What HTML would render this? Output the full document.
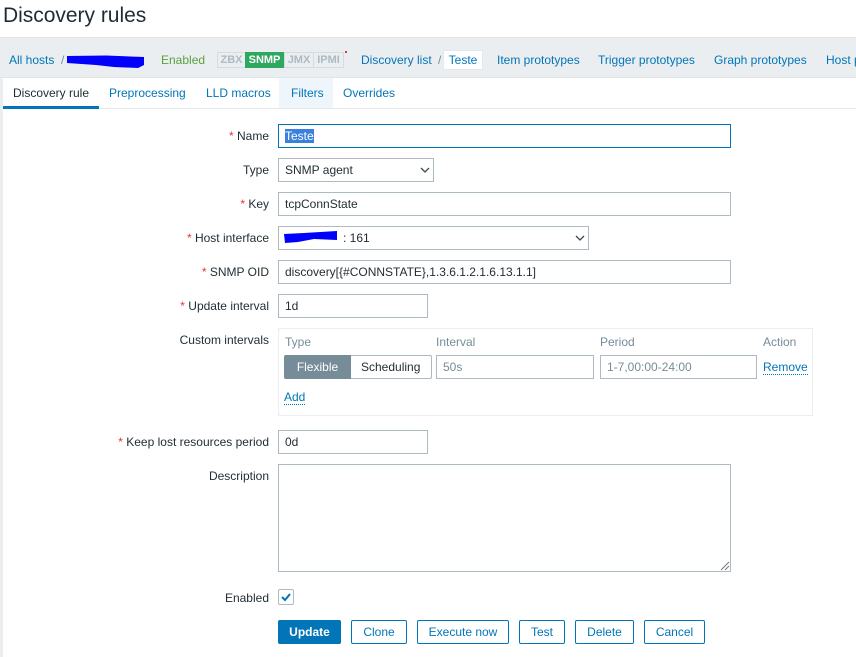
<!DOCTYPE html>
<html><head><meta charset="utf-8"><style>
html,body{margin:0;padding:0;background:#fff;overflow:hidden}
body{width:856px;height:657px;position:relative;overflow:hidden;font:12px/14px "Liberation Sans",sans-serif;color:#1f2c33}
.a{position:absolute;white-space:nowrap}
.l{color:#0275b8}
.lab{position:absolute;right:587px;white-space:nowrap;line-height:14px}
.lab i{font-style:normal;color:#e33734}
.in{position:absolute;box-sizing:border-box;height:24px;border:1px solid #acbbc2;background:#fff;padding:0 0 0 6px;line-height:22px;white-space:nowrap}
.btn{position:absolute;box-sizing:border-box;top:620px;height:24px;border:1px solid #0275b8;border-radius:2px;color:#0275b8;text-align:center;line-height:22px;background:#fff}
.h{position:absolute;top:335px;color:#768d99;line-height:14px}
.tag{position:absolute;top:52px;height:16px;box-sizing:border-box;border:1px solid #d5dcdf;color:#acbbc2;font-weight:bold;font-size:11px;line-height:14px;text-align:center;background:#ebeef0}
svg{position:absolute}
</style></head><body>
<div class="a" style="left:3px;top:3px;font-size:21px;line-height:25px;color:#1f2c33;letter-spacing:-.02px">Discovery rules</div>
<div class="a" style="left:0;top:37px;width:856px;height:41px;box-sizing:border-box;background:#ebeef0;border-top:1px solid #dfe4e7;border-bottom:1px solid #dfe4e7"></div>
<div class="a l" style="left:9px;top:53px">All hosts</div>
<div class="a" style="left:61px;top:53px;color:#768d99">/</div>
<svg style="left:66px;top:54px" width="80" height="16"><path d="M1 2 L40 1.500 L78 3 L78 11 L72 14 L48 13 L30 11 L1 9Z" fill="#0000fb"/></svg>
<div class="a" style="left:161px;top:53px;color:#59a03f">Enabled</div>
<div class="tag" style="left:217px;width:29px">ZBX</div>
<div class="tag" style="left:245px;width:39px;background:#2fa85f;border-color:#2fa85f;color:#fff">SNMP</div>
<div class="tag" style="left:284px;width:30px">JMX</div>
<div class="tag" style="left:313px;width:31px">IPMI</div>
<div class="a" style="left:345px;top:51px;width:2px;height:2px;background:#e33734"></div>
<div class="a l" style="left:361px;top:53px">Discovery list</div>
<div class="a" style="left:438px;top:53px;color:#768d99">/</div>
<div class="a l" style="left:443px;top:50px;width:40px;height:20px;box-sizing:border-box;background:#fff;border:1px solid #e4e8ea;text-align:center;line-height:18px">Teste</div>
<div class="a l" style="left:497px;top:53px">Item prototypes</div>
<div class="a l" style="left:598px;top:53px">Trigger prototypes</div>
<div class="a l" style="left:714px;top:53px">Graph prototypes</div>
<div class="a l" style="left:826px;top:53px;width:30px;overflow:hidden">Host prototypes</div>
<div class="a" style="left:0;top:78px;width:3px;height:579px;background:#ebeef0"></div>
<div class="a" style="left:3px;top:108px;width:853px;height:1px;background:#e6e9eb"></div>
<div class="a" style="left:3px;top:106px;width:96px;height:3px;background:#0275b8"></div>
<div class="a" style="left:279px;top:78px;width:54px;height:30px;background:#eef5fb"></div>
<div class="a" style="left:13px;top:86px">Discovery rule</div>
<div class="a l" style="left:109px;top:86px">Preprocessing</div>
<div class="a l" style="left:206px;top:86px">LLD macros</div>
<div class="a l" style="left:291px;top:86px">Filters</div>
<div class="a l" style="left:343px;top:86px">Overrides</div>

<div class="lab" style="top:129px"><i>*</i> Name</div>
<div class="in" style="left:278px;top:124px;width:453px;border-color:#0275b8"><span style="background:#3a80dc;color:#fff">Teste</span></div>
<div class="lab" style="top:163px">Type</div>
<div class="in" style="left:278px;top:158px;width:156px">SNMP agent</div>
<svg style="left:420px;top:166px" width="10" height="8"><path d="M1 2 L5 6 L9 2" fill="none" stroke="#3a4a52" stroke-width="1.3"/></svg>
<div class="lab" style="top:197px"><i>*</i> Key</div>
<div class="in" style="left:278px;top:192px;width:453px">tcpConnState</div>
<div class="lab" style="top:231px"><i>*</i> Host interface</div>
<div class="in" style="left:278px;top:226px;width:311px"><span style="position:absolute;left:64px;top:0">: 161</span></div>
<svg style="left:284px;top:229px" width="54" height="16"><path d="M0 5 L20 4 L53 2 L53 11 L30 10 L14 13 L1 14Z" fill="#0000fb"/></svg>
<svg style="left:575px;top:234px" width="10" height="8"><path d="M1 2 L5 6 L9 2" fill="none" stroke="#3a4a52" stroke-width="1.3"/></svg>
<div class="lab" style="top:265px"><i>*</i> SNMP OID</div>
<div class="in" style="left:278px;top:260px;width:453px">discovery[{#CONNSTATE},1.3.6.1.2.1.6.13.1.1]</div>
<div class="lab" style="top:299px"><i>*</i> Update interval</div>
<div class="in" style="left:278px;top:294px;width:150px">1d</div>
<div class="lab" style="top:333px">Custom intervals</div>
<div class="a" style="left:278px;top:328px;width:535px;height:88px;box-sizing:border-box;border:1px solid #ebeef0"></div>
<div class="h" style="left:285px">Type</div>
<div class="h" style="left:436px">Interval</div>
<div class="h" style="left:600px">Period</div>
<div class="h" style="left:763px">Action</div>
<div class="a" style="left:284px;top:355px;width:148px;height:24px;box-sizing:border-box;border:1px solid #acbbc2;border-radius:2px;background:#fff"></div>
<div class="a" style="left:284px;top:355px;width:67px;height:24px;background:#768d99;color:#fff;text-align:center;line-height:24px;border-radius:2px 0 0 2px">Flexible</div>
<div class="a" style="left:361px;top:360px">Scheduling</div>
<div class="in" style="left:436px;top:355px;width:158px;color:#768d99">50s</div>
<div class="in" style="left:600px;top:355px;width:157px;color:#768d99">1-7,00:00-24:00</div>
<div class="a l" style="left:763px;top:360px;border-bottom:1px dotted #0275b8">Remove</div>
<div class="a l" style="left:284px;top:390px;border-bottom:1px dotted #0275b8">Add</div>
<div class="lab" style="top:435px"><i>*</i> Keep lost resources period</div>
<div class="in" style="left:278px;top:430px;width:150px">0d</div>
<div class="lab" style="top:469px">Description</div>
<div class="in" style="left:278px;top:464px;width:453px;height:108px"></div>
<svg style="left:720px;top:561px" width="10" height="10"><path d="M1 9 L9 1 M5 9 L9 5" stroke="#777" stroke-width="1" fill="none"/></svg>
<div class="lab" style="top:591px">Enabled</div>
<div class="a" style="left:278px;top:589px;width:16px;height:16px;box-sizing:border-box;border:1px solid #acbbc2;border-radius:2px"></div>
<svg style="left:278px;top:589px" width="16" height="16"><path d="M4 8 L7 11 L12 5" fill="none" stroke="#0275b8" stroke-width="2"/></svg>
<div class="btn" style="left:278px;width:63px;background:#0275b8;color:#fff;font-weight:bold">Update</div>
<div class="btn" style="left:351px;width:56px">Clone</div>
<div class="btn" style="left:417px;width:92px">Execute now</div>
<div class="btn" style="left:519px;width:46px">Test</div>
<div class="btn" style="left:575px;width:59px">Delete</div>
<div class="btn" style="left:644px;width:61px">Cancel</div>
</body></html>
